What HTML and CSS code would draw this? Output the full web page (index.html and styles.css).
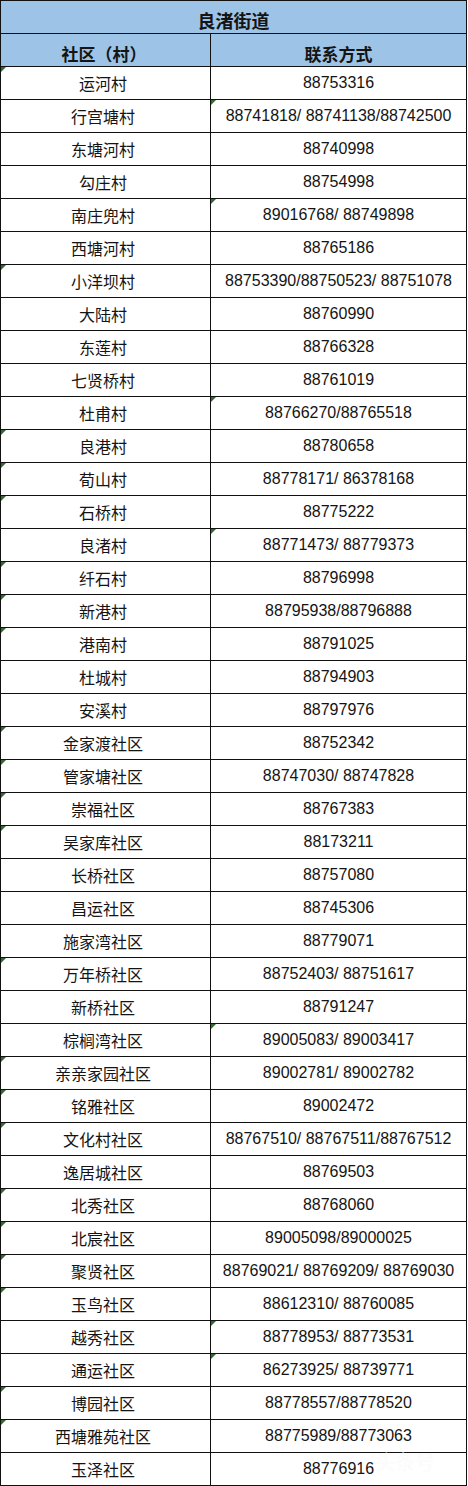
FILE: index.html
```html
<!DOCTYPE html>
<html lang="zh-CN">
<head>
<meta charset="utf-8">
<title>良渚街道</title>
<link rel="stylesheet" href="styles.css">
</head>
<body>
<div class="sheet">
  <div class="cell title">良渚街道</div>
  <div class="cell head name">社区（村）</div>
  <div class="cell head">联系方式</div>

  <div class="cell name t">运河村</div><div class="cell">88753316</div>
  <div class="cell name">行宫塘村</div><div class="cell t">88741818/ 88741138/88742500</div>
  <div class="cell name">东塘河村</div><div class="cell">88740998</div>
  <div class="cell name">勾庄村</div><div class="cell">88754998</div>
  <div class="cell name">南庄兜村</div><div class="cell t">89016768/ 88749898</div>
  <div class="cell name">西塘河村</div><div class="cell">88765186</div>
  <div class="cell name t">小洋坝村</div><div class="cell">88753390/88750523/ 88751078</div>
  <div class="cell name">大陆村</div><div class="cell">88760990</div>
  <div class="cell name">东莲村</div><div class="cell">88766328</div>
  <div class="cell name">七贤桥村</div><div class="cell">88761019</div>
  <div class="cell name">杜甫村</div><div class="cell t">88766270/88765518</div>
  <div class="cell name t">良港村</div><div class="cell">88780658</div>
  <div class="cell name t">荀山村</div><div class="cell">88778171/ 86378168</div>
  <div class="cell name t">石桥村</div><div class="cell">88775222</div>
  <div class="cell name">良渚村</div><div class="cell t">88771473/ 88779373</div>
  <div class="cell name t">纤石村</div><div class="cell">88796998</div>
  <div class="cell name t">新港村</div><div class="cell">88795938/88796888</div>
  <div class="cell name t">港南村</div><div class="cell">88791025</div>
  <div class="cell name">杜城村</div><div class="cell">88794903</div>
  <div class="cell name">安溪村</div><div class="cell">88797976</div>
  <div class="cell name t">金家渡社区</div><div class="cell">88752342</div>
  <div class="cell name t">管家塘社区</div><div class="cell">88747030/ 88747828</div>
  <div class="cell name t">崇福社区</div><div class="cell">88767383</div>
  <div class="cell name t">吴家库社区</div><div class="cell">88173211</div>
  <div class="cell name">长桥社区</div><div class="cell">88757080</div>
  <div class="cell name">昌运社区</div><div class="cell">88745306</div>
  <div class="cell name">施家湾社区</div><div class="cell">88779071</div>
  <div class="cell name t">万年桥社区</div><div class="cell">88752403/ 88751617</div>
  <div class="cell name">新桥社区</div><div class="cell">88791247</div>
  <div class="cell name">棕榈湾社区</div><div class="cell t">89005083/ 89003417</div>
  <div class="cell name t">亲亲家园社区</div><div class="cell">89002781/ 89002782</div>
  <div class="cell name t">铭雅社区</div><div class="cell">89002472</div>
  <div class="cell name t">文化村社区</div><div class="cell">88767510/ 88767511/88767512</div>
  <div class="cell name">逸居城社区</div><div class="cell">88769503</div>
  <div class="cell name t">北秀社区</div><div class="cell">88768060</div>
  <div class="cell name t">北宸社区</div><div class="cell">89005098/89000025</div>
  <div class="cell name t">聚贤社区</div><div class="cell">88769021/ 88769209/ 88769030</div>
  <div class="cell name t">玉鸟社区</div><div class="cell">88612310/ 88760085</div>
  <div class="cell name">越秀社区</div><div class="cell t">88778953/ 88773531</div>
  <div class="cell name">通运社区</div><div class="cell t">86273925/ 88739771</div>
  <div class="cell name t">博园社区</div><div class="cell">88778557/88778520</div>
  <div class="cell name t">西塘雅苑社区</div><div class="cell">88775989/88773063</div>
  <div class="cell name">玉泽社区</div><div class="cell last">88776916<span class="mark">头条号</span></div>
</div>
</body>
</html>
```
FILE: styles.css
```css
html, body {
  margin: 0;
  padding: 0;
  background: #ffffff;
}

.sheet {
  display: grid;
  grid-template-columns: 210px 256px;
  grid-auto-rows: 33px;
  width: 467px;
  border-left: 1px solid #111;
  border-top: 1px solid #111;
  box-sizing: border-box;
  font-family: "Liberation Sans", "Noto Sans CJK SC", sans-serif;
  font-size: 16px;
  color: #141414;
}

.cell {
  position: relative;
  display: flex;
  align-items: center;
  justify-content: center;
  box-sizing: border-box;
  border-right: 1px solid #111;
  border-bottom: 1px solid #111;
  white-space: nowrap;
}

.name {
  padding-right: 5px;
}

.title {
  grid-column: 1 / -1;
  background: #9dc3e6;
  font-weight: bold;
  font-size: 18px;
  padding-top: 5px;
  font-family: "Noto Sans CJK SC", sans-serif;
}

.head {
  background: #9dc3e6;
  font-weight: bold;
  font-size: 17px;
  padding-top: 6px;
  font-family: "Noto Sans CJK SC", sans-serif;
}

.head.name {
  padding-right: 3px;
}

.t::before {
  content: "";
  position: absolute;
  top: 0;
  left: 0;
  width: 0;
  height: 0;
  border-top: 5px solid #2f6b2f;
  border-right: 5px solid transparent;
}

.mark {
  position: absolute;
  left: 164px;
  top: -6px;
  font-family: "Noto Sans CJK SC", sans-serif;
  font-size: 20px;
  color: rgba(255, 255, 255, 0.85);
  text-shadow: 0 0 1px rgba(0, 0, 0, 0.06);
  pointer-events: none;
}
```
